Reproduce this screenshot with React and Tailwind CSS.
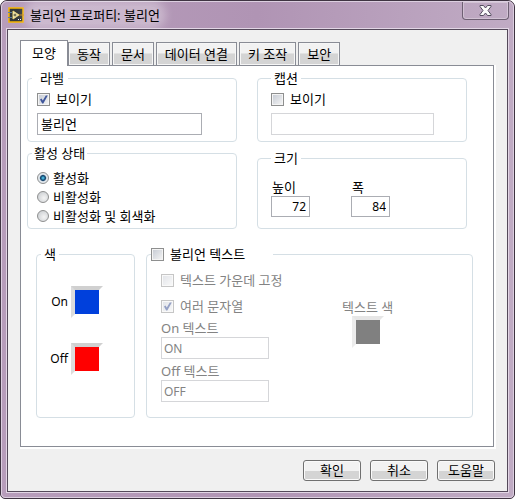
const TABS = ['모양', '동작', '문서', '데이터 연결', '키 조작', '보안'];

function Checkbox({ id, children, ...props }) {
  return (
    <span className="flex items-center gap-[6px]">
      <span className="relative flex size-[13px]">
        <input
          id={id}
          type="checkbox"
          className="peer size-[13px] appearance-none border border-[#8e8f8f] bg-linear-to-br from-[#c4c9d2] to-[#f6f6f6] shadow-[inset_0_0_0_1px_#f4f4f4] disabled:opacity-50"
          {...props}
        />
        <svg
          className="pointer-events-none absolute inset-0 hidden size-[13px] peer-checked:block peer-disabled:opacity-50"
          viewBox="0 0 13 13"
          aria-hidden="true"
        >
          <path d="M3 6.500 4.500 5.500 5.800 7.500 8.800 2.500H10.800L6.300 10.500H5.200Z" fill="#3f569b" />
        </svg>
      </span>
      <label htmlFor={id}>{children}</label>
    </span>
  );
}

function Radio({ id, children, ...props }) {
  return (
    <span className="flex h-[19px] items-center gap-1">
      <input
        id={id}
        name="enabled-state"
        type="radio"
        className="size-3 appearance-none rounded-full border border-[#8e8f8f] bg-radial-[at_60%_60%] from-[#f4f4f4] to-[#c4c8cc] checked:bg-radial checked:from-[#52c6ec] checked:from-5% checked:via-[#0d4068] checked:via-35% checked:to-[#e2e8ed] checked:to-52%"
        {...props}
      />
      <label htmlFor={id}>{children}</label>
    </span>
  );
}

function Group({ title, legendClass, className, children }) {
  return (
    <fieldset className={`min-w-0 rounded-[4px] border border-[#d5dfe5] ${className}`}>
      <legend className={`h-[18px] ${legendClass}`}>{title}</legend>
      {children}
    </fieldset>
  );
}

function Swatch({ id, className, disabled }) {
  return (
    <button
      id={id}
      type="button"
      disabled={disabled}
      className={`size-8 border-4 border-transparent border-t-[#d0d0d0] border-l-[#dcdcdc] bg-clip-padding disabled:border-t-[#e6e6e6] disabled:border-l-[#ececec] ${className}`}
    />
  );
}

function DialogButton({ children }) {
  return (
    <button
      type="button"
      className="h-[21px] w-[58px] rounded-[3px] border border-[#707070] bg-linear-to-b from-[#f2f2f2] from-50% to-[#d4d4d4] to-55% pb-px leading-[18px] shadow-[inset_0_0_0_1px_#fafafa]"
    >
      {children}
    </button>
  );
}

function TitleBar() {
  return (
    <header className="flex h-[26px] items-center pl-[6px]">
      <svg className="size-4" viewBox="0 0 16 16" aria-hidden="true">
        <rect x="1" y="1" width="14" height="14" fill="#33383c" stroke="#f7b500" strokeWidth="1.5" />
        <path d="M0 5.500h4M0 10.500h4" stroke="#5f7f9c" />
        <path d="M11 8h5" stroke="#c98a1c" />
        <path d="M5 4 11 8 5 12Z" fill="#fff6c4" stroke="#ecd67a" />
        <path d="M7 6.500v3M5.500 8h3" stroke="#4d4a30" />
        <path d="M10 12.500h4" stroke="#fff" strokeDasharray="1 1" />
      </svg>
      <h1 className="ml-[6px] rounded-full bg-white/30 shadow-[0_0_8px_6px_rgba(255,255,255,0.3)]">
        불리언 프로퍼티: 불리언
      </h1>
      <button
        type="button"
        aria-label="닫기"
        className="mr-1 ml-auto flex h-[18px] w-[47px] items-center justify-center self-start rounded-b-[4px] border border-t-0 border-[#6e5f73] pb-px shadow-[inset_0_0_0_1px_rgba(255,255,255,0.3)]"
      >
        <svg className="h-[11px] w-[13px]" viewBox="0 0 13 11" aria-hidden="true">
          <path
            d="M1 .5H4.500L6.500 3 8.500 .5H12V1.500L9 5.500 12 9.500V10.500H8.500L6.500 8 4.500 10.500H1V9.500L4 5.500 1 1.500Z"
            fill="#fafafa"
            stroke="#544d5f"
          />
        </svg>
      </button>
    </header>
  );
}

export default function App() {
  return (
    <div className="flex min-h-screen flex-col rounded-t-[7px] rounded-b-[5px] border border-[#3f3442] bg-[#b195b5] font-['Noto_Sans','Noto_Sans_CJK_KR',sans-serif] text-[13px] leading-[18px] text-black">
      <div className="flex flex-1 flex-col rounded-t-[6px] rounded-b-[4px] border border-[#dccfe0] bg-linear-to-r from-[#b79dbb] via-[#b094b4] to-[#c0abc4]">
        <TitleBar />
        <main className="mx-1 mb-1 flex flex-1 flex-col border border-[#e2d6e5]">
          <div className="flex flex-1 flex-col border border-[#54495a] bg-[#f0f0f0] pt-[10px] pr-[13px] pb-[10px] pl-3">
            <div role="tablist" className="relative -mb-px flex items-end">
              {TABS.map((tab, index) => (
                <button
                  key={tab}
                  type="button"
                  role="tab"
                  aria-selected={index === 0}
                  className={
                    index === 0
                      ? 'h-[26px] w-12 border border-b-0 border-[#898c95] bg-white pb-[2px]'
                      : 'mr-[2px] h-6 border border-[#898c95] bg-linear-to-b from-[#f2f2f2] from-45% to-[#d4d4d4] to-50% px-2 pb-px shadow-[inset_0_0_0_1px_#f6f6f6]'
                  }
                >
                  {tab}
                </button>
              ))}
            </div>

            <div
              role="tabpanel"
              className="flex flex-1 flex-col border border-[#898c95] bg-white pt-[3px] shadow-[1px_1px_0_1px_#fff]"
            >
              <div className="grid grid-cols-2 items-end gap-x-5 gap-y-[2px] pr-[26px] pl-[6px]">
                <Group title="라벨" className="pb-[6px] pl-[9px]" legendClass="-ml-[5px] pl-2 pr-1">
                  <div className="mb-[2px] flex h-6 items-center">
                    <Checkbox id="label-visible" defaultChecked>보이기</Checkbox>
                  </div>
                  <input
                    aria-label="라벨"
                    defaultValue="불리언"
                    className="block h-[22px] w-[165px] border border-[#abadb3] px-[3px] pb-px"
                  />
                </Group>

                <Group title="캡션" className="pb-[6px] pl-[13px]" legendClass="px-[3px]">
                  <div className="mb-[2px] flex h-6 items-center">
                    <Checkbox id="caption-visible">보이기</Checkbox>
                  </div>
                  <input
                    aria-label="캡션"
                    disabled
                    className="block h-[22px] w-[163px] border border-[#d5d6d9] px-[3px]"
                  />
                </Group>

                <Group title="활성 상태" className="pt-[6px] pb-[3px] pl-[9px]" legendClass="-ml-[5px] px-[2px]">
                  <Radio id="enabled" defaultChecked>활성화</Radio>
                  <Radio id="disabled">비활성화</Radio>
                  <Radio id="disabled-gray">비활성화 및 회색화</Radio>
                </Group>

                <Group title="크기" className="pt-[11px] pb-[11px] pl-[13px]" legendClass="px-[3px]">
                  <div className="flex gap-[41px]">
                    <div className="w-[39px]">
                      <label htmlFor="height" className="block h-[18px] pl-px">높이</label>
                      <input
                        id="height"
                        defaultValue="72"
                        className="block h-[21px] w-full border border-[#abadb3] pr-[3px] text-right text-[12px]"
                      />
                    </div>
                    <div className="w-[39px]">
                      <label htmlFor="width" className="block h-[18px] pl-px">폭</label>
                      <input
                        id="width"
                        defaultValue="84"
                        className="block h-[21px] w-full border border-[#abadb3] pr-[3px] text-right text-[12px]"
                      />
                    </div>
                  </div>
                </Group>
              </div>

              <div className="mt-4 flex gap-[11px] pr-5 pb-7 pl-[15px]">
                <Group title="색" className="w-[99px] pt-[23px] pr-[31px]" legendClass="ml-1 px-[3px]">
                  <div className="flex flex-col gap-[25px] text-[12px]">
                    <div className="flex items-center justify-end gap-[3px]">
                      <label htmlFor="on-color">On</label>
                      <Swatch id="on-color" className="bg-[#0040dc]" />
                    </div>
                    <div className="flex items-center justify-end gap-[3px]">
                      <label htmlFor="off-color">Off</label>
                      <Swatch id="off-color" className="bg-[#ff0000]" />
                    </div>
                  </div>
                </Group>

                <Group
                  title={<Checkbox id="boolean-text">불리언 텍스트</Checkbox>}
                  className="flex-1 pt-[5px] pb-[15px] pl-[14px]"
                  legendClass="-ml-[10px] pr-7"
                >
                  <div className="flex text-[#838383]">
                    <div className="w-[181px]">
                      <div className="flex h-6 items-center">
                        <Checkbox id="lock-center" disabled>텍스트 가운데 고정</Checkbox>
                      </div>
                      <div className="mt-[2px] flex h-6 items-center">
                        <Checkbox id="multi-strings" disabled defaultChecked>여러 문자열</Checkbox>
                      </div>
                      <label htmlFor="on-text" className="mt-px block h-[18px]">On 텍스트</label>
                      <input
                        id="on-text"
                        disabled
                        defaultValue="ON"
                        className="block h-[22px] w-[108px] border border-[#d5d6d9] px-[2px] text-[12px]"
                      />
                      <label htmlFor="off-text" className="mt-[3px] block h-[18px]">Off 텍스트</label>
                      <input
                        id="off-text"
                        disabled
                        defaultValue="OFF"
                        className="block h-[22px] w-[108px] border border-[#d5d6d9] px-[2px] text-[12px]"
                      />
                    </div>
                    <div className="flex flex-col items-center pt-[30px]">
                      <label htmlFor="text-color" className="h-[18px]">텍스트 색</label>
                      <Swatch id="text-color" disabled className="bg-[#808080]" />
                    </div>
                  </div>
                </Group>
              </div>
            </div>

            <footer className="-mr-px flex justify-end gap-[9px] pt-[13px]">
              <DialogButton>확인</DialogButton>
              <DialogButton>취소</DialogButton>
              <DialogButton>도움말</DialogButton>
            </footer>
          </div>
        </main>
      </div>
    </div>
  );
}
